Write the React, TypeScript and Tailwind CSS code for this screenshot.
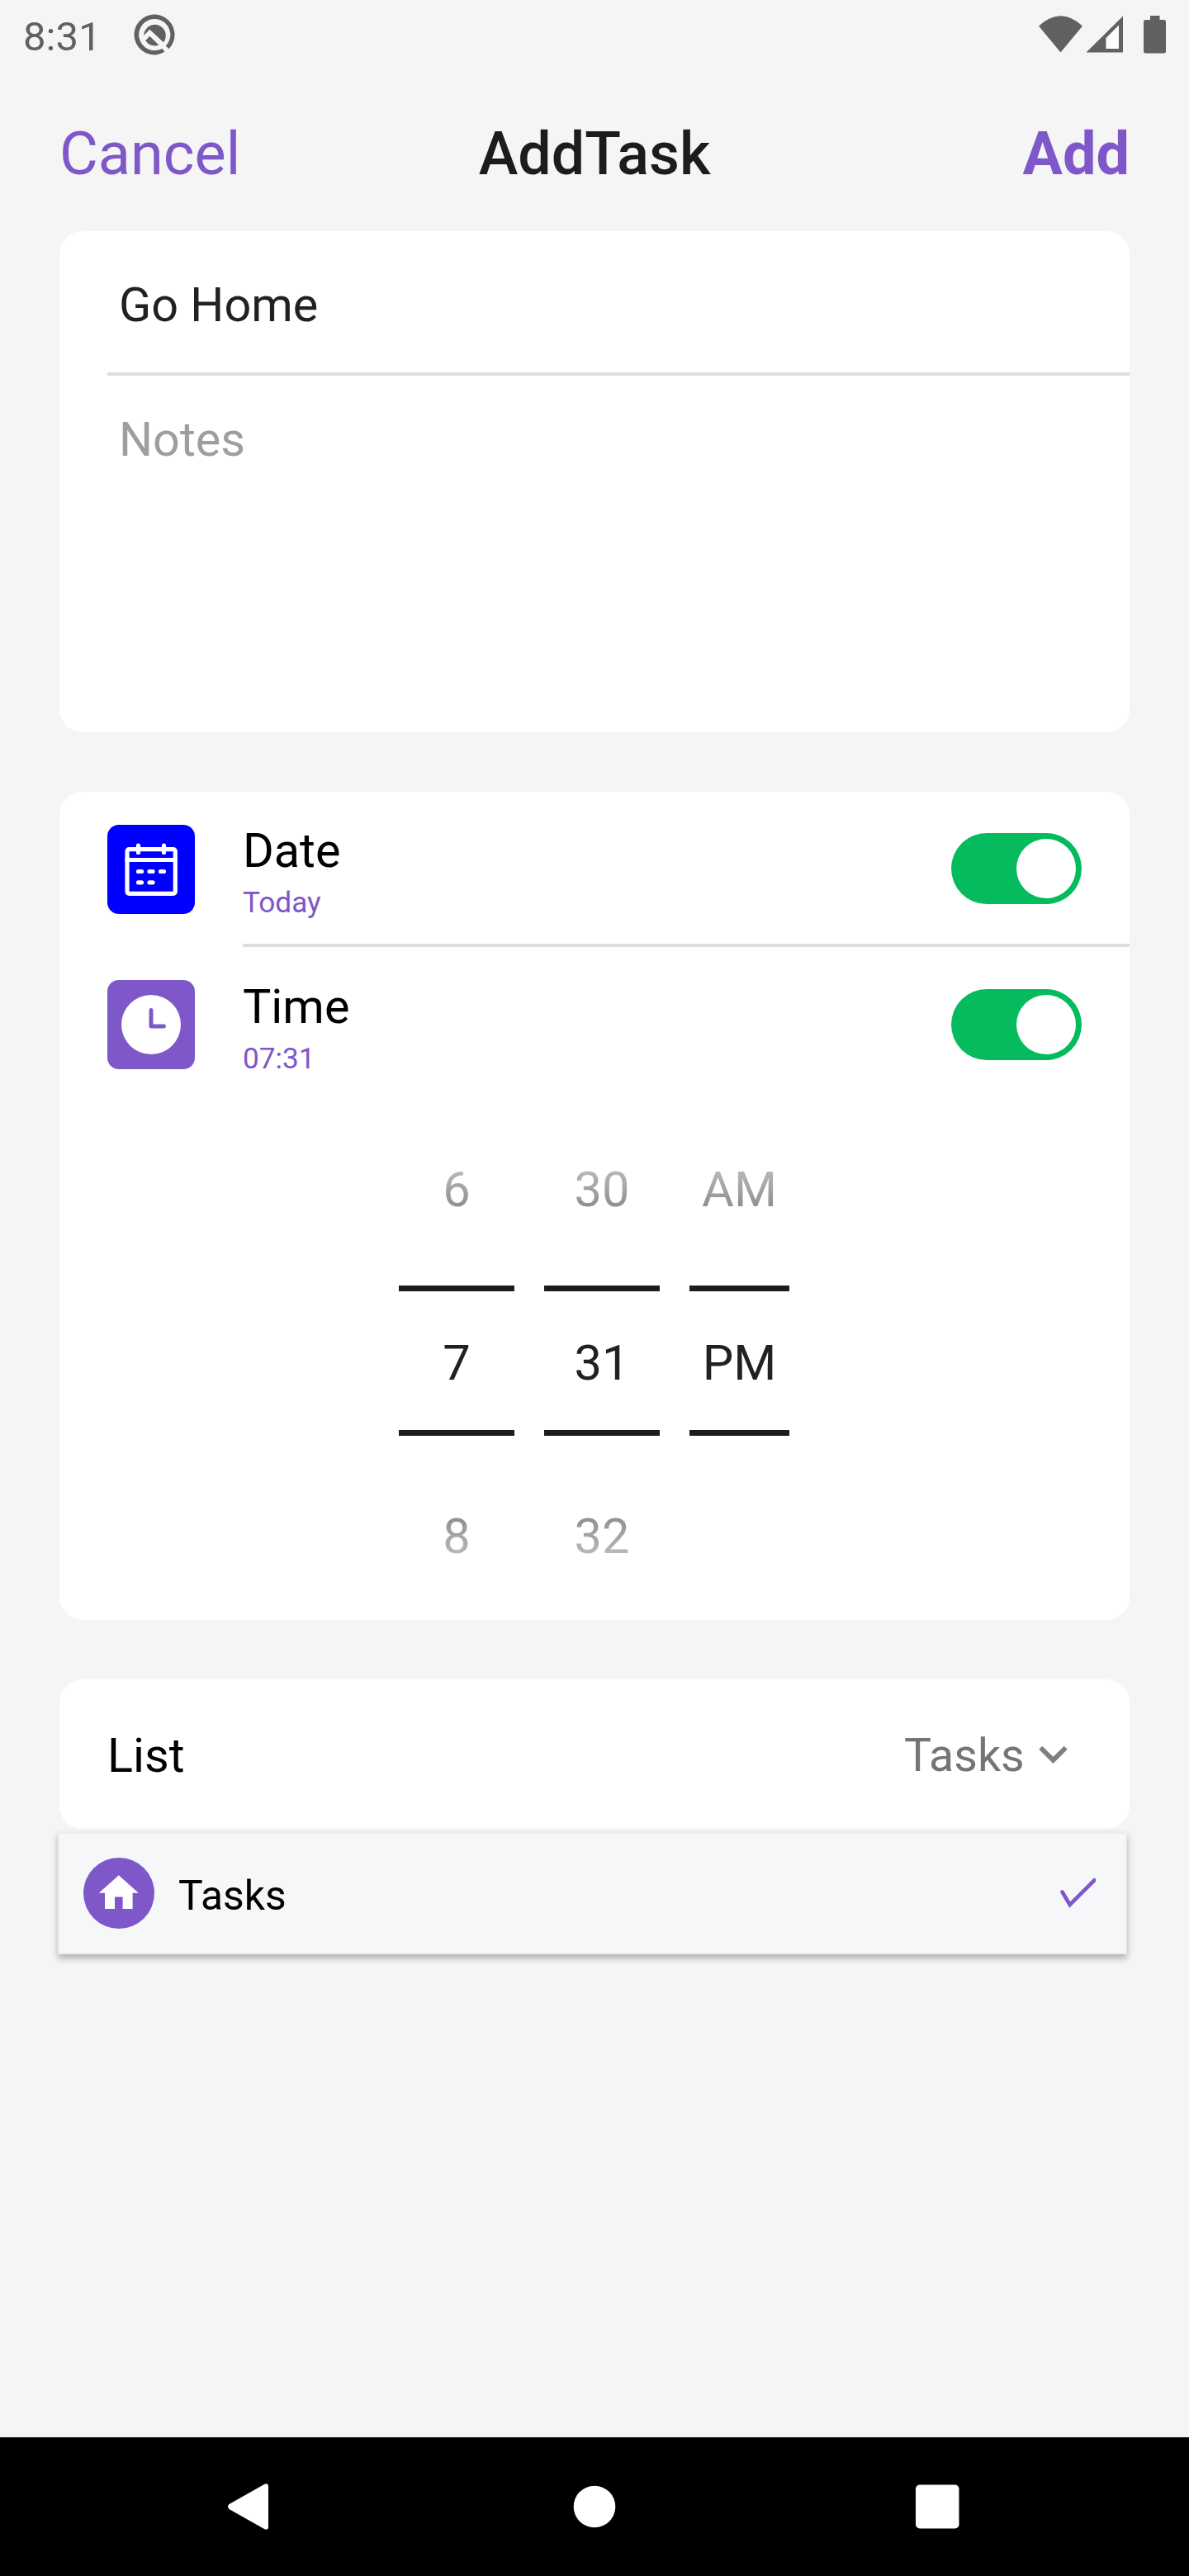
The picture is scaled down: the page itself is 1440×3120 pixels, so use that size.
import type { ReactNode } from "react";

function StatusBar() {
  return (
    <div className="flex h-[84px] items-start justify-between pl-[28px] text-[#616161]">
      <div className="flex">
        <span className="h-[84px] w-[124px] text-[49px] leading-[89px]">8:31</span>
        <svg className="h-[84px] w-[72px]" viewBox="152 0 72 84" fill="currentColor">
          <g transform="scale(0.33333)">
            <path
              d="M598 187.500A72 72 0 0 1 561.500 199.500A73.500 73.500 0 1 1 613.500 177.500L602.500 166.500A57.300 57.300 0 1 0 562 183.500Q577 183 590 177Z"
            />
            <path d="M522.500 129A40 40 0 1 1 594 154L544 107.500Z" />
            <path d="M544 131.500L577 163.500A40 40 0 0 1 528.500 148Z" />
          </g>
        </svg>
      </div>
      <svg className="h-[84px] w-[200px]" viewBox="1240 0 200 84" fill="currentColor">
        <path d="M1258 31.500Q1284.500 7 1311 31.500L1284.500 63.500Z" />
        <path d="M1315.500 63.500L1360 19.500V63.500Z" />
        <path d="M1339.500 46L1355 30.500V59H1339.500Z" fill="#fdfdfd" />
        <path d="M1393 19H1404.500V24H1409.500Q1412 24 1412 26.500V62Q1412 64.500 1409.500 64.500H1387.500Q1385 64.500 1385 62V26.500Q1385 24 1387.500 24H1393Z" />
      </svg>
    </div>
  );
}

function Header() {
  return (
    <header className="grid h-[196px] grid-cols-3 items-center px-[72px] pt-[9px] text-[72px] leading-[84px]">
      <span className="text-[#7e57c8]">Cancel</span>
      <span className="text-center text-[71.800px] font-medium text-[#1c1c1e]">AddTask</span>
      <span className="text-right font-bold text-[#7e57c8]">Add</span>
    </header>
  );
}

function Toggle() {
  return (
    <div className="mt-[50px] mr-[58px] ml-auto flex h-[86px] w-[158px] items-center justify-end rounded-full bg-[#05bb5e] pr-[7px]">
      <div className="size-[72px] rounded-full bg-white" />
    </div>
  );
}

function OptionRow({ icon, title, value }: { icon: ReactNode; title: string; value: string }) {
  return (
    <>
      {icon}
      <div className="mt-[40px] ml-[58px] leading-[63px]">
        <div className="text-[57.600px] text-black">{title}</div>
        <div className="text-[35.200px] text-[#7e57c8]">{value}</div>
      </div>
      <Toggle />
    </>
  );
}

function CalendarIcon() {
  return (
    <svg className="mt-[40px] h-[108px] w-[106px]" viewBox="0 0 106 108">
      <rect width="106" height="108" rx="14" fill="#0000ff" />
      <g stroke="#fff" fill="none" strokeWidth="5.200" strokeLinecap="round">
        <rect x="24" y="29.600" width="58.300" height="53.700" rx="2.500" />
        <path d="M24 42.500H82.300" />
        <path d="M37.500 25V33.500M68.500 25V33.500" />
        <path d="M37.500 56.500H41.500M51 56.500H55M64.500 56.500H68.500M37.500 69.800H41.500M51 69.800H55" />
      </g>
    </svg>
  );
}

function ClockIcon() {
  return (
    <svg className="mt-[39px] h-[108px] w-[106px]" viewBox="0 0 106 108">
      <rect width="106" height="108" rx="14" fill="#7e57c8" />
      <circle cx="53" cy="54" r="36" fill="#fff" />
      <path
        d="M53 36.500V56H68.500"
        fill="none"
        stroke="#7e57c8"
        strokeWidth="4.900"
        strokeLinecap="round"
        strokeLinejoin="round"
      />
    </svg>
  );
}

function PickerColumn({ above, current, below, width }: { above: string; current: string; below: string; width: string }) {
  return (
    <div className={`${width} text-center text-[59.600px]`}>
      <div className="h-[219px] bg-linear-to-b from-[#b8b8b8] from-[80px] to-[#909090] to-[123px] bg-clip-text leading-[206px] text-transparent">
        {above}
      </div>
      <div className="h-[7px] bg-[#1c1c1e]" />
      <div className="h-[168px] leading-[174px] text-[#212121]">{current}</div>
      <div className="h-[7px] bg-[#1c1c1e]" />
      <div className="h-[223px] bg-linear-to-b from-[#909090] from-[99px] to-[#b8b8b8] to-[142px] bg-clip-text leading-[244px] text-transparent">
        {below}
      </div>
    </div>
  );
}

function NavBar() {
  return (
    <nav className="mt-auto h-[168px] bg-black">
      <svg className="block h-[168px] w-full" viewBox="0 0 1440 168" fill="#fff">
        <path d="M320 57Q325 54.500 325 60V108Q325 113.500 320 111L277.500 87Q274.500 84 277.500 81Z" />
        <circle cx="720" cy="84" r="25.300" />
        <rect x="1109" y="57.500" width="52.500" height="53" rx="5" />
      </svg>
    </nav>
  );
}

export default function App() {
  return (
    <div className="flex h-[3120px] w-[1440px] flex-col overflow-hidden bg-[#f5f5f5] font-['Roboto',sans-serif]">
      <StatusBar />
      <Header />
      <main className="px-[72px]">
        <section className="h-[607px] rounded-[28px] bg-white text-[57.600px]">
          <div className="h-[171px] pl-[72px] leading-[179px] text-[#212121]">Go Home</div>
          <div className="ml-[58px] h-[4px] bg-[#dedede]" />
          <div className="pl-[72px] leading-[155px] text-[#9e9e9e]">Notes</div>
        </section>

        <section className="mt-[72px] h-[1003px] rounded-[28px] bg-white">
          <div className="flex h-[184px] items-start pl-[58px]">
            <OptionRow icon={<CalendarIcon />} title="Date" value="Today" />
          </div>
          <div className="ml-[222px] h-[4px] bg-[#dedede]" />
          <div className="flex h-[191px] items-start pt-px pl-[58px]">
            <OptionRow icon={<ClockIcon />} title="Time" value="07:31" />
          </div>
          <div className="flex gap-[36px] pl-[411px]">
            <PickerColumn above="6" current="7" below="8" width="w-[140px]" />
            <PickerColumn above="30" current="31" below="32" width="w-[140px]" />
            <PickerColumn above="AM" current="PM" below="" width="w-[121px]" />
          </div>
        </section>

        <section className="mt-[72px] flex h-[181px] justify-between rounded-[28px] bg-white pl-[58px] leading-[185px]">
          <span className="text-[57.600px] text-black">List</span>
          <div className="flex text-[#757575]">
            <span className="w-[146px] text-[55.500px] leading-[186px]">Tasks</span>
            <svg className="mt-[56px] mr-[58px] size-[69px]" viewBox="0 0 24 24" fill="#808080">
              <path d="M7.410 8.590L12 13.170l4.590-4.580L18 10l-6 6-6-6z" />
            </svg>
          </div>
        </section>

        <div className="mt-[3px] mr-[3px] -ml-[2px] flex h-[149px] items-center border-2 border-t-3 border-[#ededee] bg-[#f6f7f9] pr-[36px] pl-[29px] shadow-[0_5px_8px_rgba(0,0,0,0.28)]">
          <div className="flex size-[86px] items-center justify-center rounded-full bg-[#7e57c8]">
            <svg className="size-[57.600px]" viewBox="0 0 24 24" fill="#fff">
              <path d="M10 20v-6h4v6h5v-8h3L12 3 2 12h3v8z" />
            </svg>
          </div>
          <span className="ml-[29px] pt-[6px] text-[49.800px] leading-[80px] text-black">Tasks</span>
          <svg className="ml-auto h-[40px] w-[44px]" viewBox="1283 2273 44 40" fill="none" stroke="#7e57c8" strokeWidth="4.600" strokeLinecap="round">
            <path d="M1286.500 2291.500L1295.700 2307L1325.500 2277.200" />
          </svg>
        </div>
      </main>
      <NavBar />
    </div>
  );
}
